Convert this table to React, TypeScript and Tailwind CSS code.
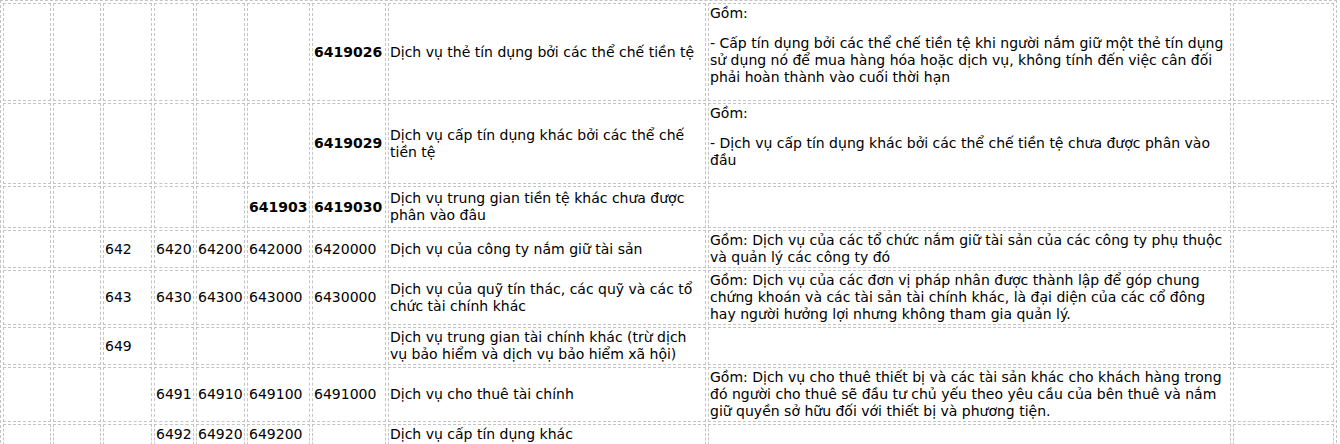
type Cell = string | { b: string };

type Row = {
  codes: Cell[]; // 7 code columns
  name: string[];
  desc: string[][]; // paragraphs, each a list of lines
  h?: string;
};

const rows: Row[] = [
  {
    codes: ["", "", "", "", "", "", { b: "6419026" }],
    name: ["Dịch vụ thẻ tín dụng bởi các thể chế tiền tệ"],
    desc: [
      ["Gồm:"],
      [
        "- Cấp tín dụng bởi các thể chế tiền tệ khi người nắm giữ một thẻ tín dụng",
        "sử dụng nó để mua hàng hóa hoặc dịch vụ, không tính đến việc cân đối",
        "phải hoàn thành vào cuối thời hạn",
      ],
    ],
  },
  {
    codes: ["", "", "", "", "", "", { b: "6419029" }],
    name: ["Dịch vụ cấp tín dụng khác bởi các thể chế", "tiền tệ"],
    desc: [
      ["Gồm:"],
      [
        "- Dịch vụ cấp tín dụng khác bởi các thể chế tiền tệ chưa được phân vào",
        "đầu",
      ],
    ],
  },
  {
    codes: ["", "", "", "", "", { b: "641903" }, { b: "6419030" }],
    name: ["Dịch vụ trung gian tiền tệ khác chưa được", "phân vào đâu"],
    desc: [],
    h: "h-[42px]",
  },
  {
    codes: ["", "", "642", "6420", "64200", "642000", "6420000"],
    name: ["Dịch vụ của công ty nắm giữ tài sản"],
    desc: [
      [
        "Gồm: Dịch vụ của các tổ chức nắm giữ tài sản của các công ty phụ thuộc",
        "và quản lý các công ty đó",
      ],
    ],
  },
  {
    codes: ["", "", "643", "6430", "64300", "643000", "6430000"],
    name: ["Dịch vụ của quỹ tín thác, các quỹ và các tổ", "chức tài chính khác"],
    desc: [
      [
        "Gồm: Dịch vụ của các đơn vị pháp nhân được thành lập để góp chung",
        "chứng khoán và các tài sản tài chính khác, là đại diện của các cổ đông",
        "hay người hưởng lợi nhưng không tham gia quản lý.",
      ],
    ],
  },
  {
    codes: ["", "", "649", "", "", "", ""],
    name: [
      "Dịch vụ trung gian tài chính khác (trừ dịch",
      "vụ bảo hiểm và dịch vụ bảo hiểm xã hội)",
    ],
    desc: [],
  },
  {
    codes: ["", "", "", "6491", "64910", "649100", "6491000"],
    name: ["Dịch vụ cho thuê tài chính"],
    desc: [
      [
        "Gồm: Dịch vụ cho thuê thiết bị và các tài sản khác cho khách hàng trong",
        "đó người cho thuê sẽ đầu tư chủ yếu theo yêu cầu của bên thuê và nắm",
        "giữ quyền sở hữu đối với thiết bị và phương tiện.",
      ],
    ],
  },
  {
    codes: ["", "", "", "6492", "64920", "649200", ""],
    name: ["Dịch vụ cấp tín dụng khác"],
    desc: [],
  },
];

const widths = [
  "w-[48px]",
  "w-[48px]",
  "w-[49px]",
  "w-[40px]",
  "w-[49px]",
  "w-[63px]",
  "w-[74px]",
  "w-[318px]",
  "w-[523px]",
  "w-[101px]",
];

const td = "border border-dashed border-[#c4c4c4] p-px align-middle whitespace-nowrap";

function Lines({ lines }: { lines: string[] }) {
  return (
    <>
      {lines.map((l, i) => (
        <span key={i}>
          {i > 0 && <br />}
          {l}
        </span>
      ))}
    </>
  );
}

export default function App() {
  return (
    <div className="bg-white min-h-screen overflow-hidden font-['DejaVu_Sans',sans-serif] text-[14px] leading-[17px] text-black">
      <table className="table-fixed w-[1337px] border-separate border-spacing-[2px] border border-dashed border-[#c4c4c4]">
        <tbody>
          {rows.map((r, ri) => (
            <tr key={ri} className={r.h}>
              {r.codes.map((c, ci) => (
                <td key={ci} className={`${td} ${ri === 0 ? widths[ci] : ""}`}>
                  {typeof c === "string" ? c : <b className="font-bold">{c.b}</b>}
                </td>
              ))}
              <td className={`${td} ${ri === 0 ? widths[7] : ""}`}>
                <Lines lines={r.name} />
              </td>
              <td className={`${td} ${ri === 0 ? widths[8] : ""}`}>
                {r.desc.length > 1
                  ? r.desc.map((p, pi) => (
                      <p key={pi} className="mb-[13px]">
                        <Lines lines={p} />
                      </p>
                    ))
                  : r.desc.map((p, pi) => <Lines key={pi} lines={p} />)}
              </td>
              <td className={`${td} ${ri === 0 ? widths[9] : ""}`}></td>
            </tr>
          ))}
        </tbody>
      </table>
    </div>
  );
}
